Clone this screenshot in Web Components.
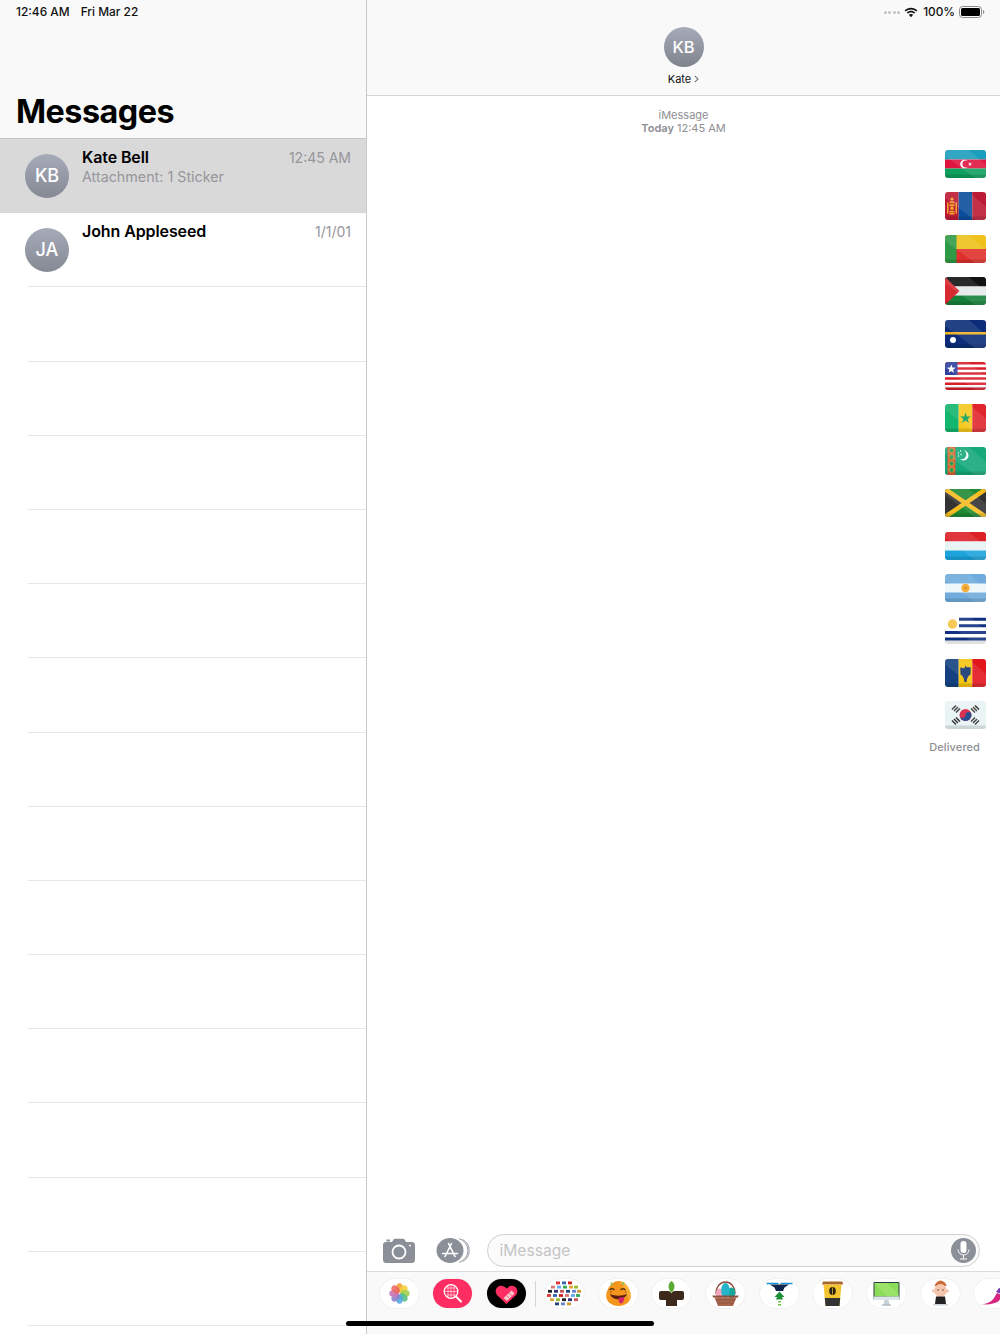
<!DOCTYPE html>
<html>
<head>
<meta charset="utf-8">
<style>
    html, body { margin: 0; padding: 0; background: #fff; }
    body { font-family: Inter, "Liberation Sans", sans-serif; }
</style>
</head>
<body>
<messages-app>
    <master-pane slot="master">
        <conv-row initials="KB" name="Kate Bell" preview="Attachment: 1 Sticker" time="12:45 AM" selected></conv-row>
        <conv-row initials="JA" name="John Appleseed" time="1/1/01"></conv-row>
        <conv-row></conv-row><conv-row></conv-row><conv-row></conv-row><conv-row></conv-row>
        <conv-row></conv-row><conv-row></conv-row><conv-row></conv-row><conv-row></conv-row>
        <conv-row></conv-row><conv-row></conv-row><conv-row></conv-row><conv-row></conv-row>
        <conv-row></conv-row><conv-row></conv-row>
    </master-pane>
    <detail-pane slot="detail">
        <flag-sticker code="az"></flag-sticker>
        <flag-sticker code="mn"></flag-sticker>
        <flag-sticker code="bj"></flag-sticker>
        <flag-sticker code="ps"></flag-sticker>
        <flag-sticker code="nr"></flag-sticker>
        <flag-sticker code="lr"></flag-sticker>
        <flag-sticker code="sn"></flag-sticker>
        <flag-sticker code="tm"></flag-sticker>
        <flag-sticker code="jm"></flag-sticker>
        <flag-sticker code="lu"></flag-sticker>
        <flag-sticker code="ar"></flag-sticker>
        <flag-sticker code="uy"></flag-sticker>
        <flag-sticker code="md"></flag-sticker>
        <flag-sticker code="kr"></flag-sticker>
    </detail-pane>
</messages-app>

<script>
class MessagesApp extends HTMLElement {
    constructor() {
        super();
        this.shadowDOM = this.attachShadow({mode: "open"});
        this.shadowDOM.innerHTML = `
            <style>
                :host { display: grid; grid-template-columns: 366px 1px 633px; width: 1000px; height: 1334px; overflow: hidden; position: relative; }
                .rule { background: #c8c8c8; }
                .home { position: absolute; left: 346px; top: 1321px; width: 308px; height: 5px; border-radius: 3px; background: #000; }
            </style>
            <slot name="master"></slot>
            <div class="rule"></div>
            <slot name="detail"></slot>
            <div class="home"></div>`;
    }
}

class MasterPane extends HTMLElement {
    constructor() {
        super();
        this.shadowDOM = this.attachShadow({mode: "open"});
        this.shadowDOM.innerHTML = `
            <style>
                :host { display: flex; flex-direction: column; height: 1334px; overflow: hidden; }
                header { height: 138px; flex: none; background: #f9f9f9; border-bottom: 1px solid #c4c4c4; padding-left: 16px; display: flex; flex-direction: column; }
                .status { font-size: 11.9px; font-weight: 500; color: #111; padding-top: 4px; height: 16px; line-height: 16px; display: flex; gap: 11px; }
                h1 { margin: 72px 0 0 0; font-size: 32.3px; line-height: 40px; font-weight: 700; color: #000; letter-spacing: -0.5px; }
            </style>
            <header>
                <div class="status"><span>12:46 AM</span><span>Fri Mar 22</span></div>
                <h1>Messages</h1>
            </header>
            <slot></slot>`;
    }
}

class ConvRow extends HTMLElement {
    constructor() {
        super();
        this.shadowDOM = this.attachShadow({mode: "open"});
    }
    connectedCallback() {
        const name = this.getAttribute("name");
        const selected = this.hasAttribute("selected");
        this.shadowDOM.innerHTML = `
            <style>
                :host { display: block; height: 74.2px; flex: none; background: ${selected ? "#d9d9d9" : "#fff"}; }
                .wrap { height: 100%; box-sizing: border-box; margin-left: 28px; display: flex; ${selected ? "" : "border-bottom: 1px solid #e6e6e6;"} }
                .avatar { flex: none; width: 44px; height: 44px; border-radius: 50%; margin: 14.5px 0 0 -3px; background: linear-gradient(#a6abb8, #858994); color: #fff; font-size: 18px; font-weight: 500; display: flex; align-items: center; justify-content: center; }
                .text { flex: 1; margin-left: 13px; padding-right: 15px; padding-top: 8px; min-width: 0; }
                .top { display: flex; justify-content: space-between; align-items: baseline; }
                .name { font-size: 16px; font-weight: 600; color: #000; line-height: 21px; letter-spacing: -0.1px; }
                .time { font-size: 14px; color: #96969b; }
                .preview { font-size: 14.3px; color: #96969b; line-height: 20px; margin-top: -1px; }
            </style>
            <div class="wrap">
                ${name ? `
                <div class="avatar">${this.getAttribute("initials")}</div>
                <div class="text">
                    <div class="top"><span class="name">${name}</span><span class="time">${this.getAttribute("time")}</span></div>
                    <div class="preview">${this.getAttribute("preview") || ""}</div>
                </div>` : ""}
            </div>`;
    }
}

class DetailPane extends HTMLElement {
    constructor() {
        super();
        this.shadowDOM = this.attachShadow({mode: "open"});
        this.shadowDOM.innerHTML = `
            <style>
                :host { display: flex; flex-direction: column; height: 1334px; background: #fff; overflow: hidden; }
                header { height: 96px; flex: none; box-sizing: border-box; background: #f9f9f9; border-bottom: 1px solid #d4d4d4; position: relative; display: flex; flex-direction: column; align-items: center; padding-top: 27px; }
                .status { position: absolute; top: 0; right: 15px; height: 24px; display: flex; align-items: center; gap: 4px; font-size: 11.8px; font-weight: 500; color: #111; }
                .dots { display: flex; gap: 1.5px; }
                .dots i { width: 3px; height: 3px; border-radius: 50%; background: #c2c2c2; }
                .avatar { width: 40px; height: 40px; border-radius: 50%; background: linear-gradient(#a6abb8, #7f838d); color: #fff; font-size: 16.5px; font-weight: 500; display: flex; align-items: center; justify-content: center; }
                .who { margin-top: 5px; font-size: 11px; line-height: 14px; color: #111; display: flex; align-items: center; gap: 3px; }
                .stamp { flex: none; text-align: center; font-size: 11px; line-height: 13px; color: #8e8e93; padding-top: 12.5px; height: 41.5px; }
                .stamp b { font-weight: 600; }
                .thread { flex: 1; display: flex; flex-direction: column; align-items: flex-end; padding-right: 14px; }
                .delivered { font-size: 11px; font-weight: 500; color: #8e8e93; margin-top: -3.6px; line-height: 14px; padding-right: 6px; letter-spacing: 0.1px; }
                footer { flex: none; }
            </style>
            <header>
                <div class="status">
                    <span class="dots"><i></i><i></i><i></i><i></i></span>
                    <svg width="14" height="11" viewBox="0 0 15 11"><path d="M7.5 2.2c2.2 0 4.2.9 5.700 2.300l1.100-1.200C12.500 1.600 10.100.5 7.500.5S2.500 1.600.7 3.300l1.100 1.200c1.500-1.400 3.500-2.300 5.700-2.300z" fill="#111"/><path d="M7.500 5.400c1.300 0 2.500.5 3.400 1.300l1.100-1.200C10.800 4.400 9.200 3.700 7.500 3.700s-3.300.7-4.500 1.800l1.100 1.200c.9-.8 2.100-1.300 3.400-1.300z" fill="#111"/><path d="M7.500 10.500l2.300-2.500c-.6-.6-1.400-.9-2.300-.9s-1.700.3-2.300.9z" fill="#111"/></svg>
                    <span style="margin-left:1px">100%</span>
                    <svg width="26" height="12" viewBox="0 0 26 12"><rect x=".5" y=".5" width="22" height="11" rx="3" fill="none" stroke="#8a8a8a"/><rect x="2" y="2" width="19" height="8" rx="1.500" fill="#000"/><path d="M24 4v4c.8-.3 1.300-1.100 1.300-2S24.800 4.300 24 4z" fill="#8a8a8a"/></svg>
                </div>
                <div class="avatar">KB</div>
                <div class="who"><span>Kate</span><svg width="5" height="8" viewBox="0 0 5 8"><path d="M.8.8L4 4 .8 7.200" fill="none" stroke="#77777c" stroke-width="1.100"/></svg></div>
            </header>
            <div class="stamp">iMessage<br><b>Today</b> 12:45 AM</div>
            <div class="thread">
                <slot></slot>
                <div class="delivered">Delivered</div>
            </div>
            <footer><compose-bar></compose-bar><app-drawer></app-drawer></footer>`;
    }
}

// flag art: one viewBox per sticker, 41x28
const FLAGS = {
    az: `<rect width="41" height="9.500" fill="#1b9dbd"/><rect y="9.500" width="41" height="9" fill="#e0153f"/><rect y="18.500" width="41" height="9.500" fill="#0fa05e"/><circle cx="19.500" cy="14" r="4.300" fill="#fff"/><circle cx="20.800" cy="14" r="3.400" fill="#e0153f"/><path d="M25 12l.5 1.400 1.500.1-1.200.9.400 1.400-1.200-.8-1.200.8.400-1.400-1.200-.9 1.500-.1z" fill="#fff"/>`,
    mn: `<rect width="13.700" height="28" fill="#bd1a35"/><rect x="13.700" width="13.700" height="28" fill="#0b4f9c"/><rect x="27.300" width="13.700" height="28" fill="#bd1a35"/><g fill="#f4a530"><circle cx="7" cy="7" r="1.600"/><path d="M4.500 9.500h5v1.800h-5z"/><path d="M2 10.500h1.500v11H2zM10.500 10.500H12v11h-1.500z"/><path d="M4.500 12.300h5v2h-5z"/><circle cx="7" cy="16.300" r="1.800"/><path d="M4.500 18.800h5v1.200h-5zM4.500 20.500h5v2h-5z"/></g>`,
    bj: `<rect width="41" height="14" fill="#eec21a"/><rect y="14" width="41" height="14" fill="#e0302b"/><rect width="11.500" height="28" fill="#2f9a45"/>`,
    ps: `<rect width="41" height="9.500" fill="#111"/><rect y="9.500" width="41" height="9" fill="#e6e9ea"/><rect y="18.500" width="41" height="9.500" fill="#15803a"/><path d="M0 0L14.500 14 0 28z" fill="#d62a30"/>`,
    nr: `<rect width="41" height="28" fill="#0b2c78"/><rect y="12" width="41" height="2.500" fill="#f4b323"/><circle cx="8" cy="20" r="3" fill="#fff"/>`,
    lr: `<rect width="41" height="28" fill="#fff"/><path d="M0 1.300h41M0 6.400h41M0 11.500h41M0 16.600h41M0 21.700h41M0 26.800h41" stroke="#d81f2a" stroke-width="2.500"/><rect width="12.500" height="13" fill="#2f3f9f"/><path d="M6.300 2.500l1.100 3.100 3.200.1-2.500 2 .9 3.100-2.700-1.800-2.700 1.800.9-3.100-2.500-2 3.200-.1z" fill="#fff"/>`,
    sn: `<rect width="13.700" height="28" fill="#14b56e"/><rect x="13.700" width="13.700" height="28" fill="#f7c81e"/><rect x="27.300" width="13.700" height="28" fill="#e0262d"/><path d="M20.500 8.500l1.300 3.900h4.200l-3.400 2.500 1.300 4-3.400-2.500-3.400 2.500 1.300-4-3.400-2.500h4.200z" fill="#0d9f5d"/>`,
    tm: `<rect width="41" height="28" fill="#15a878"/><rect x="2.500" width="8" height="28" fill="#d9603a"/><g fill="#2f9a55" stroke="#e8a03a" stroke-width=".8"><circle cx="6.500" cy="3.500" r="2.500"/><circle cx="6.500" cy="10" r="2.500"/><circle cx="6.500" cy="16.500" r="2.500"/><circle cx="6.500" cy="23" r="2.500"/></g><circle cx="18.500" cy="8.500" r="5" fill="#fff"/><circle cx="16.500" cy="7.500" r="4.800" fill="#15a878"/><circle cx="13.500" cy="6" r=".7" fill="#fff"/><circle cx="15.500" cy="4" r=".7" fill="#fff"/><circle cx="13.500" cy="9" r=".7" fill="#fff"/><circle cx="16" cy="7.500" r=".7" fill="#fff"/>`,
    jm: `<rect width="41" height="28" fill="#333"/><path d="M0 0L20.500 14 41 0z" fill="#1f8a34"/><path d="M0 28L20.500 14 41 28z" fill="#1f8a34"/><path d="M0 0L41 28M41 0L0 28" stroke="#f6bb1f" stroke-width="4.500"/>`,
    lu: `<rect width="41" height="9.500" fill="#dd1f26"/><rect y="9.500" width="41" height="9" fill="#e8f3f3"/><rect y="18.500" width="41" height="9.500" fill="#1ca4dd"/>`,
    ar: `<rect width="41" height="28" fill="#6fabdc"/><rect y="9.500" width="41" height="9" fill="#eef7fb"/><circle cx="20.500" cy="14" r="4.200" fill="#f5a623"/><circle cx="20.500" cy="14" r="1.800" fill="#e08a18"/>`,
    uy: `<rect width="41" height="28" fill="#fff"/><path d="M14 3.200h27M14 9.800h27M0 16.400h41M0 23h41" stroke="#0f2f80" stroke-width="3"/><circle cx="7.500" cy="8" r="4.700" fill="#f6c445"/>`,
    md: `<rect width="13.700" height="28" fill="#14407f"/><rect x="13.700" width="13.700" height="28" fill="#f6c40f"/><rect x="27.300" width="13.700" height="28" fill="#e2141c"/><path d="M20.500 6.500l1.300 2 1-.5 3 .5-.3 7-2 1.500-1.500 3-.5 3h-2l-.5-3-1.500-3-2-1.500-.3-7 3 .5 1 .5z" fill="#14356e"/>`,
    kr: `<rect width="41" height="28" fill="#e9f4f4"/><g stroke="#333" stroke-width="1.500"><path d="M11 4.500l-4 4M13 6l-4 4M15 7.500l-4 4"/><path d="M26 7.500l4 4M28 6l4 4M30 4.500l4 4"/><path d="M11 23.500l-4-4M13 22l-4-4M15 20.500l-4-4"/><path d="M26 20.500l4-4M28 22l4-4M30 23.500l4-4"/></g><circle cx="20.500" cy="14" r="6" fill="#d61c3f"/><path d="M14.500 14a6 6 0 0 0 12 0c0-1.700-1.300-3-3-3s-3 1.300-3 3-1.300 3-3 3-3-1.300-3-3z" fill="#143a85"/>`
};

class FlagSticker extends HTMLElement {
    constructor() {
        super();
        this.shadowDOM = this.attachShadow({mode: "open"});
    }
    connectedCallback() {
        const code = this.getAttribute("code");
        this.shadowDOM.innerHTML = `
            <style>
                :host { display: block; width: 41px; height: 28px; margin-bottom: 14.4px; }
                svg { display: block; }
            </style>
            <svg width="41" height="28" viewBox="0 0 41 28">
                <defs><clipPath id="c"><rect width="41" height="28" rx="3"/></clipPath></defs>
                <g clip-path="url(#c)">
                    ${FLAGS[code]}
                    <path d="M0 0H24L41 15V28H30L0 6z" fill="#fff" opacity=".1"/>
                    <rect y="24.500" width="41" height="3.500" fill="#000" opacity=".12"/>
                </g>
            </svg>`;
    }
}

class ComposeBar extends HTMLElement {
    constructor() {
        super();
        this.shadowDOM = this.attachShadow({mode: "open"});
        this.shadowDOM.innerHTML = `
            <style>
                :host { display: flex; align-items: center; height: 48px; box-sizing: border-box; padding: 6px 20px 0 16px; background: #fff; }
                .cam { flex: none; display: block; }
                .apps { flex: none; display: block; margin-left: 21px; }
                .input { flex: 1; margin-left: 16px; height: 33px; box-sizing: border-box; border: 1.5px solid #cfcfcf; border-radius: 17px; background: #fbfbfb; display: flex; align-items: center; justify-content: space-between; padding: 0 3px 0 11.5px; font-size: 15.6px; color: #c4c4c6; }
                .mic { width: 25px; height: 25px; border-radius: 50%; background: #8a8f98; display: flex; align-items: center; justify-content: center; }
            </style>
            <svg class="cam" width="32" height="25" viewBox="0 0 32 25"><path d="M3 4h6l1.500-2.500c.3-.5.800-.7 1.300-.7h8.400c.5 0 1 .2 1.300.7L23 4h6c1.600 0 3 1.300 3 3v15c0 1.700-1.400 3-3 3H3c-1.600 0-3-1.300-3-3V7c0-1.700 1.400-3 3-3z" fill="#8a8f98"/><path d="M3.500 1.500h3.500v2H3.500z" fill="#8a8f98"/><circle cx="16" cy="14" r="6.500" fill="none" stroke="#fff" stroke-width="1.800"/><circle cx="27" cy="7.500" r=".9" fill="#fff"/></svg>
            <svg class="apps" width="35" height="25" viewBox="0 0 35 25"><path d="M23 .6a12.400 12.400 0 0 1 0 23.800M26.500 1.500a12.400 12.400 0 0 1 0 22" fill="none" stroke="#8a8f98" stroke-width=".9"/><ellipse cx="14" cy="12.500" rx="13.500" ry="12.500" fill="#8a8f98"/><path d="M15.500 5.500L9 18.500M12.500 5.500L19 18.500M6.500 15.500h15" fill="none" stroke="#fff" stroke-width="1.600" stroke-linecap="round"/></svg>
            <div class="input"><span>iMessage</span><span class="mic"><svg width="13" height="19" viewBox="0 0 13 19"><rect x="3.500" y="0" width="6" height="12" rx="3" fill="#fff"/><path d="M1 8.500c0 3 2.500 5.500 5.500 5.500S12 11.500 12 8.500M6.500 14v3.500M3 18h7" fill="none" stroke="#fff" stroke-width="1"/></svg></span></div>`;
    }
}

// tiny flags scattered inside the pill of the flag sticker pack
function flagCluster() {
    const colors = ["#d33", "#3a5", "#c55", "#36a", "#da3", "#247", "#c22", "#9b3", "#68c", "#d77", "#222", "#c93", "#6ae", "#337"];
    const rows = [[13, 19, 25], [8, 14, 20, 26, 31], [5, 11, 17, 23, 29, 34], [4, 10, 16, 22, 28, 33], [7, 13, 19, 25, 31], [12, 18, 24]];
    let out = "";
    let n = 0;
    rows.forEach((xs, r) => {
        xs.forEach(x => {
            out += `<rect x="${x - 2}" y="${2.5 + r * 4.2}" width="4" height="2.800" fill="${colors[n % colors.length]}"/>`;
            n += 3;
        });
    });
    return out;
}

const PILLS = {
    photos: `<g transform="translate(19.500 14.500)">${["#f0a23a,0","#f4cf3c,45","#a5cf4f,90","#59bf86,135","#57a7e0,180","#8f82c9,225","#c978b8,270","#ea6a63,315"].map(p => { const [c, r] = p.split(","); return `<ellipse cx="0" cy="-5.500" rx="3.400" ry="4.700" fill="${c}" opacity=".9" transform="rotate(${r})"/>`; }).join("")}</g>`,
    search: `<circle cx="18" cy="12.500" r="6.800" fill="none" stroke="#fff" stroke-width="1.300"/><path d="M11.500 12.500h13M18 6v13M13.500 9h9M13.500 16h9M15 6.500v12M21 6.500v12" stroke="#fff" stroke-width=".6"/><path d="M23 17.500l5 5" stroke="#fff" stroke-width="2" stroke-linecap="round"/>`,
    heart: `<path d="M19.500 25l-8.800-8.300c-2.700-2.600-2.700-6.500 0-8.700 2.400-1.900 5.800-1.600 8.800 1.500 3-3.100 6.400-3.400 8.800-1.500 2.700 2.200 2.700 6.100 0 8.700z" fill="#ff2d62"/><path d="M16.500 19l8-7.500 3 3-7.500 7.500z" fill="#f4c5c9"/><path d="M19.500 16.500l3 3M22 14l3 3" stroke="#ff2d62" stroke-width=".6"/>`,
    flags: flagCluster(),
    face: `<path d="M19.500 2c6 0 10 5 12 12 2 7-4 13-12 13s-14-6-12-13c2-7 6-12 12-12z" fill="#f4961e"/><path d="M19.500 2c6 0 10 5 12 12 1 3 .3 6-1.500 8.300C28 12 24 5 19.500 2z" fill="#fbb03b"/><path d="M10.500 11q2.500-2.500 5 0M21.500 11q2.500-2.500 5 0" stroke="#5b3410" stroke-width="1.200" fill="none"/><path d="M11 13.500l2-1M28 13.500l-2-1" stroke="#5b3410" stroke-width=".6"/><path d="M11 15c2 6.500 14 7.500 17 0-5 2.200-12 2.200-17 0z" fill="#5b2110"/><path d="M20 18.500c2 0 4 .2 5-.5 .6 3.500-1 6.500-3 6.500s-2.800-3-2-6z" fill="#d7256b"/><path d="M12 3.500l1.500 3M25 3l-1.500 3" stroke="#6fbf5a" stroke-width="1.200"/>`,
    plant: `<path d="M19.500 2c3.500 2.500 4.500 7.500 0 11.500-4.500-4-3.500-9 0-11.500z" fill="#5aa932"/><path d="M9 12h7c2 0 3 1 3.500 2.500C20 13 21 12 23 12h7c1.300 0 2 .7 2 2v5c0 1.300-.7 2-2 2h-5v6H14v-6H9c-1.300 0-2-.7-2-2v-5c0-1.300.7-2 2-2z" fill="#3d2a1c"/>`,
    basket: `<path d="M10 15C10 -1 29 -1 29 15" fill="none" stroke="#8c4c3a" stroke-width="1.300"/><ellipse cx="13.500" cy="14.500" rx="3.500" ry="5" fill="#f2a6c4"/><ellipse cx="25.500" cy="14" rx="3.800" ry="5.500" fill="#14a89a"/><ellipse cx="19.500" cy="11.500" rx="4.300" ry="7.500" fill="#24b3c7"/><path d="M6.500 16.500h26l-.5 2h-25z" fill="#8c4c3a"/><path d="M8.500 18.500h22l-3.500 8.500H12z" fill="#a8674f"/><path d="M10 21h19M11.500 24h16" stroke="#7f4735" stroke-width=".7"/>`,
    drone: `<path d="M6.500 4.500h12M20.500 4.500h12" stroke="#1593d6" stroke-width="1.300"/><path d="M10 5.500h19l-4.500 3-1.500 3.500h-7L14.500 8.500z" fill="#10264a"/><path d="M19.500 12.500l5 5.500h-2.500l1 2.500h-7l1-2.500H14.500z" fill="#1f8f3a"/><path d="M18 22h3v1.500h-3zM18 25h3v1.500h-3z" fill="#6fc24a"/>`,
    coffee: `<path d="M10 2.500h19.500l.5 3H9z" fill="#a8662e"/><path d="M10.500 5.500h18l-2 21.500h-14z" fill="#f4c430"/><path d="M11.800 19h15.400l-.7 8H12.500z" fill="#333"/><ellipse cx="19.500" cy="12" rx="3.300" ry="4" fill="#2a2015"/><path d="M19.500 8.500v7" stroke="#f4c430" stroke-width=".7"/>`,
    imac: `<rect x="6.500" y="3" width="26" height="18" rx="1" fill="#2d3a44"/><rect x="7.500" y="4" width="24" height="13.500" fill="#8bdc58"/><path d="M7.500 4h12l12 10.500v3H20z" fill="#a1e46f" opacity=".7"/><rect x="6.500" y="17.500" width="26" height="3.500" fill="#dce5ea"/><path d="M17.500 21h4l1 5h-6z" fill="#c6d0d6"/><path d="M15 25.500h9v1.200h-9z" fill="#aab5bb"/>`,
    kid: `<path d="M13.500 7c1-3.500 3.500-5 6-5.500C22 2 25 3.500 25.500 7z" fill="#c96a3a"/><circle cx="19.500" cy="11.500" r="6.500" fill="#f5c6ae"/><circle cx="12.500" cy="12" r="1.600" fill="#f5c6ae"/><circle cx="26.500" cy="12" r="1.600" fill="#f5c6ae"/><circle cx="17" cy="11" r=".7" fill="#333"/><circle cx="22" cy="11" r=".7" fill="#333"/><path d="M15 17.500h9l1 7.500H14z" fill="#222"/><path d="M12 25h15v1.500H12z" fill="#cbd5da"/>`,
    brush: `<path d="M7 25c6 0 10-2 13-6l3-5 5 2-3 6c-5 3-11 4-18 3z" fill="#d6257f"/><path d="M22 13l3-4 4 1-1.500 5z" fill="#7a3ab0"/>`
};

class AppPill extends HTMLElement {
    constructor() {
        super();
        this.shadowDOM = this.attachShadow({mode: "open"});
    }
    connectedCallback() {
        const bg = this.getAttribute("bg") || "#fff";
        this.shadowDOM.innerHTML = `
            <style>
                :host { display: block; flex: none; width: 39px; height: 29px; }
                svg { display: block; border-radius: 14.5px; box-shadow: 0 0 0 .5px #e8e8e8; }
            </style>
            <svg width="39" height="29" viewBox="0 0 39 29" style="background:${bg}">${PILLS[this.getAttribute("art")]}</svg>`;
    }
}

class AppDrawer extends HTMLElement {
    constructor() {
        super();
        this.shadowDOM = this.attachShadow({mode: "open"});
        this.shadowDOM.innerHTML = `
            <style>
                :host { display: flex; align-items: flex-start; height: 63px; box-sizing: border-box; padding: 7px 0 0 12.5px; gap: 14.7px; background: #f9f9f9; border-top: 1px solid #dcdcdc; overflow: hidden; }
                .sep { flex: none; width: 1px; height: 26px; margin: 2px -6.2px 0 -5.2px; background: #d4d4d4; }
            </style>
            <app-pill art="photos"></app-pill>
            <app-pill art="search" bg="#ff2d62"></app-pill>
            <app-pill art="heart" bg="#000"></app-pill>
            <div class="sep"></div>
            <app-pill art="flags"></app-pill>
            <app-pill art="face"></app-pill>
            <app-pill art="plant"></app-pill>
            <app-pill art="basket"></app-pill>
            <app-pill art="drone"></app-pill>
            <app-pill art="coffee"></app-pill>
            <app-pill art="imac"></app-pill>
            <app-pill art="kid"></app-pill>
            <app-pill art="brush"></app-pill>`;
    }
}

customElements.define("messages-app", MessagesApp);
customElements.define("master-pane", MasterPane);
customElements.define("conv-row", ConvRow);
customElements.define("detail-pane", DetailPane);
customElements.define("flag-sticker", FlagSticker);
customElements.define("compose-bar", ComposeBar);
customElements.define("app-pill", AppPill);
customElements.define("app-drawer", AppDrawer);
</script>
</body>
</html>
